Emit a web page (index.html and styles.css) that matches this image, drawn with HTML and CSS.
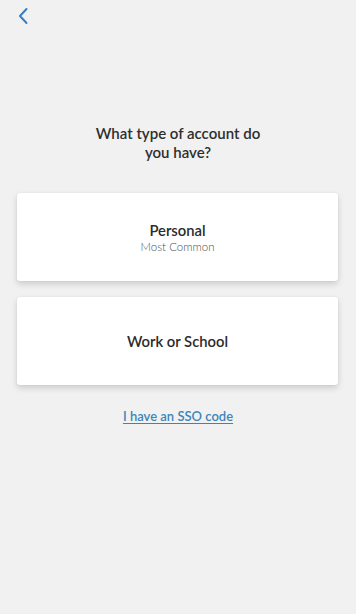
FILE: index.html
```html
<!DOCTYPE html>
<html lang="en">
<head>
<meta charset="utf-8">
<title>Account type</title>
<link rel="stylesheet" href="styles.css">
</head>
<body>
<div class="screen">
  <header class="topbar">
    <button class="back" aria-label="Back">
      <svg width="12" height="18" viewBox="0 0 12 18"><path d="M9.5 2 L3 9 L9.5 16" fill="none" stroke="#3a7fc0" stroke-width="2" stroke-linecap="round" stroke-linejoin="round"/></svg>
    </button>
  </header>
  <h1 class="title">What type of account do<br>you have?</h1>
  <div class="options">
    <button class="card">
      <span class="card-title">Personal</span>
      <span class="card-sub">Most Common</span>
    </button>
    <button class="card">
      <span class="card-title">Work or School</span>
    </button>
  </div>
  <a class="sso" href="#">I have an SSO code</a>
</div>
</body>
</html>
```
FILE: styles.css
```css
html, body {
  margin: 0;
  padding: 0;
  background: #f1f1f1;
}
body {
  font-family: "Lato", "Noto Sans", sans-serif;
  color: #2b2b2b;
}
.screen {
  display: flex;
  flex-direction: column;
  min-height: 614px;
}
.topbar {
  height: 32px;
  display: flex;
  align-items: flex-start;
  padding: 7px 0 0 16px;
  box-sizing: border-box;
}
.back {
  background: none;
  border: 0;
  padding: 0;
  width: 14px;
  height: 18px;
  cursor: pointer;
}
.title {
  margin: 92px 0 0;
  font-size: 15px;
  line-height: 19px;
  font-weight: 600;
  text-align: center;
  color: #2e2e2e;
}
.options {
  margin: 31px 18px 0 17px;
  display: flex;
  flex-direction: column;
  gap: 16px;
}
.card {
  height: 88px;
  background: #ffffff;
  border: 0;
  border-radius: 3px;
  box-shadow: 0 3px 6px rgba(0,0,0,0.16), 0 0 2px rgba(0,0,0,0.06);
  display: flex;
  flex-direction: column;
  align-items: center;
  justify-content: center;
  font-family: inherit;
  padding: 0;
}
.card-title {
  font-size: 14.8px;
  line-height: 19px;
  font-weight: 600;
  color: #2b2b2b;
  margin-top: 1px;
}
.card-sub {
  font-size: 11.5px;
  line-height: 14px;
  font-weight: 300;
  color: #4f4f4f;
  margin-top: 0;
}
.sso {
  align-self: center;
  margin-top: 23px;
  font-size: 13px;
  line-height: 17px;
  font-weight: 600;
  color: #3d85b9;
  text-decoration: underline;
  text-underline-offset: 2px;
}
```
